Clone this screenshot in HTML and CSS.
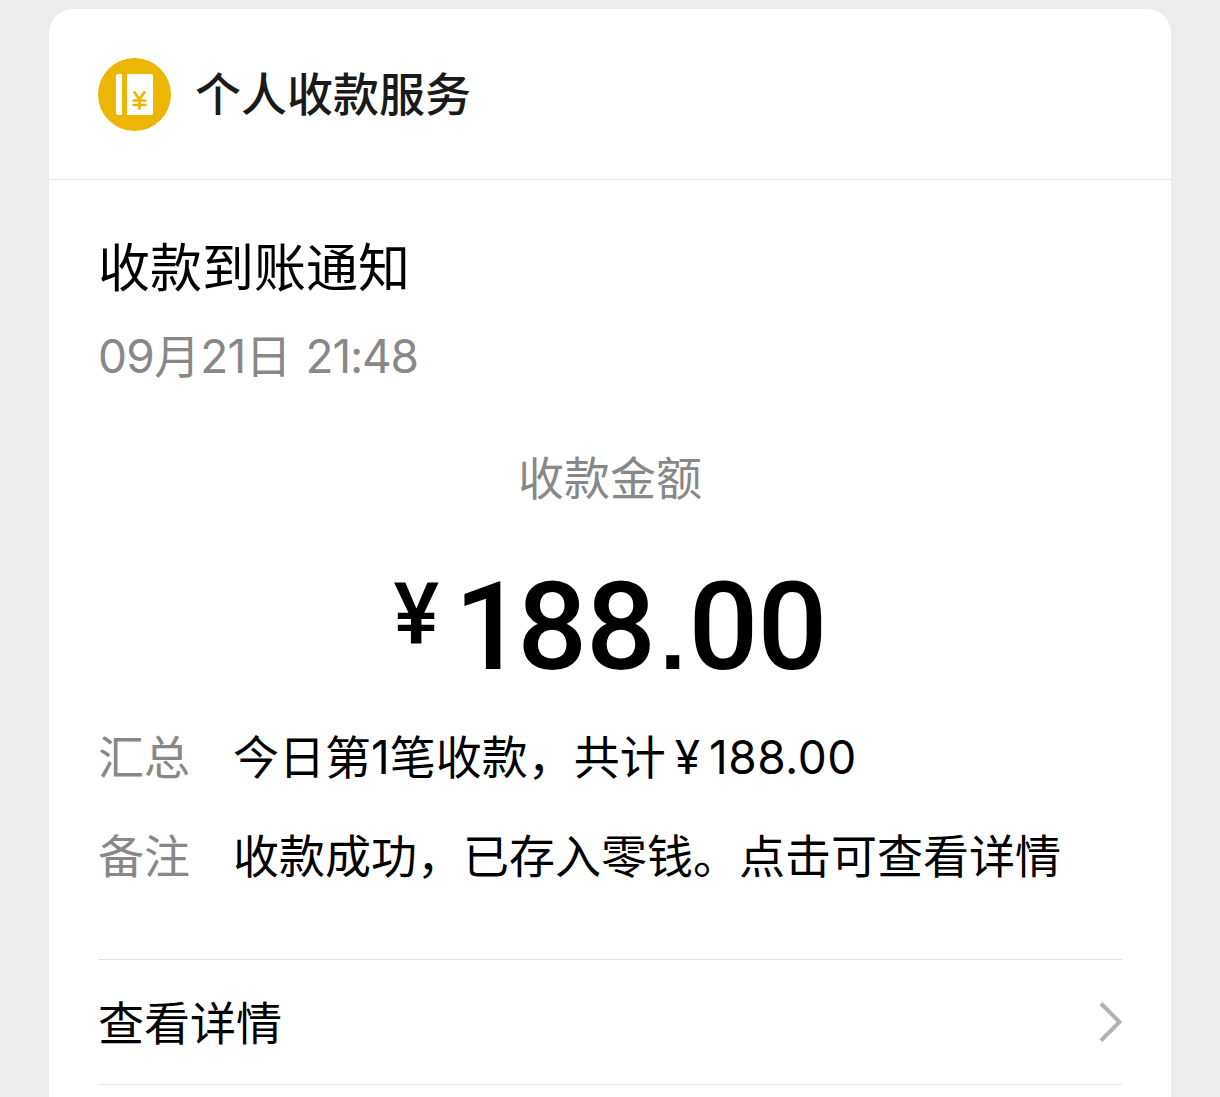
FILE: index.html
```html
<!DOCTYPE html>
<html lang="zh-CN">
<head>
    <meta charset="UTF-8">
    <meta name="viewport" content="width=device-width, initial-scale=1.0">
    <title>收款到账通知</title>
    <link rel="stylesheet" href="styles.css">
</head>
<body>
    <div class="card">
        <div class="header">
            <svg class="logo" viewBox="0 0 73 73">
                <circle cx="36.5" cy="36.5" r="36.5" fill="#edb604"/>
                <path d="M20 16h4v41h-4a2 2 0 0 1-2-2V18a2 2 0 0 1 2-2z" fill="#fff"/>
                <path d="M29 16h24a2 2 0 0 1 2 2v37a2 2 0 0 1-2 2H29z" fill="#fff"/>
                <path d="M36 33.500l5.500 8 5.500-8M41.500 41v10.500M34.500 42.500h14M34.500 47h14" fill="none" stroke="#edb604" stroke-width="2.700"/>
            </svg>
            <span class="name">个人收款服务</span>
        </div>
        <div class="content">
            <h2 class="title">收款到账通知</h2>
            <div class="date"><span class="num">09</span>月<span class="num">21</span>日<span class="num time">21:48</span></div>
            <div class="amount-label">收款金额</div>
            <div class="amount"><span class="yen">¥</span><span class="value"><span class="one">1</span>88<span class="dot">.</span>00</span></div>
            <div class="row">
                <span class="label">汇总</span>
                <span class="text">今日第<span class="num">1</span>笔收款，共计<span class="num small-yen">¥</span><span class="num sum">188.00</span></span>
            </div>
            <div class="row">
                <span class="label">备注</span>
                <span class="text">收款成功，已存入零钱。点击可查看详情</span>
            </div>
            <div class="detail">
                <span class="link">查看详情</span>
                <svg class="arrow" viewBox="0 0 24 42">
                    <path d="M3 2.500L21.500 21 3 39.500" fill="none" stroke="#b2b2b2" stroke-width="4"/>
                </svg>
            </div>
        </div>
    </div>
</body>
</html>
```
FILE: styles.css
```css
* {
    box-sizing: border-box;
}
body {
    margin: 0;
    height: 1097px;
    padding: 9px 49px 0;
    overflow: hidden;
    background-color: #ececec;
    font-family: "Noto Sans CJK SC", sans-serif;
    font-size: 46px;
    line-height: 60px;
    color: #000;
    white-space: nowrap;
}
.card {
    height: 1120px;
    background: #fff;
    border-radius: 24px;
}
.header {
    display: flex;
    align-items: center;
    height: 171px;
    padding: 0 49px;
    border-bottom: 1px solid #e3e3e3;
}
.logo {
    width: 73px;
    height: 73px;
    margin-right: 24px;
}
.name {
    padding-bottom: 6px;
    font-weight: 500;
    color: #1a1a1a;
}
.content {
    padding: 52px 49px 0;
}
.title {
    margin: 0;
    font-size: 52px;
    font-weight: 400;
    line-height: 66px;
}
.num {
    font-family: Inter, sans-serif;
    line-height: 1;
}
.date {
    height: 60px;
    margin-top: 25px;
    color: #888;
}
.date .num {
    letter-spacing: -0.7px;
}
.date .time {
    margin-left: 14px;
    letter-spacing: -1.2px;
}
.amount-label {
    height: 60px;
    margin-top: 62px;
    text-align: center;
    color: #888;
}
.amount {
    display: flex;
    justify-content: center;
    align-items: flex-start;
    height: 100px;
    margin-top: 72px;
    font-family: Roboto, sans-serif;
    font-weight: 500;
}
.yen {
    font-size: 86px;
    line-height: 76px;
}
.value {
    font-size: 123px;
    line-height: 100px;
    letter-spacing: -1px;
}
.one {
    margin-left: 15px;
    letter-spacing: -7px;
}
.dot {
    margin: 0 4px 0 5px;
    font-family: "Liberation Sans", sans-serif;
    font-size: 92px;
    font-weight: 700;
    line-height: 1;
}
.row {
    display: flex;
    height: 60px;
    margin-top: 39px;
}
.amount + .row {
    margin-top: 47px;
}
.label {
    width: 135px;
    color: #888;
}
.small-yen {
    margin: 0 9px;
}
.sum {
    letter-spacing: 0.5px;
}
.detail {
    display: flex;
    justify-content: space-between;
    align-items: center;
    height: 126px;
    margin-top: 76px;
    border-top: 1px solid #e3e3e3;
    border-bottom: 1px solid #e3e3e3;
}
.link {
    padding-bottom: 5px;
}
.arrow {
    width: 24px;
    height: 42px;
}
```
